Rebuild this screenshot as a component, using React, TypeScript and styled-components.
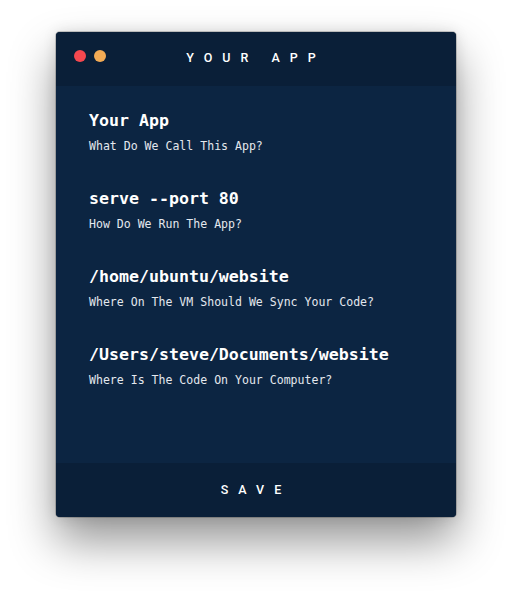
import React from "react";
import styled, { createGlobalStyle } from "styled-components";

const Global = createGlobalStyle`
  html, body { margin: 0; padding: 0; background: #ffffff; }
  body { font-family: "DejaVu Sans Mono", "Liberation Mono", monospace; }
`;

const Page = styled.div`
  display: flex;
  justify-content: center;
  padding-top: 32px;
  height: 597px;
  box-sizing: border-box;
`;

const Window = styled.div`
  width: 400px;
  height: 485px;
  display: flex;
  flex-direction: column;
  border-radius: 4px;
  overflow: hidden;
  background: #0c2542;
  box-shadow: 0 24px 46px rgba(0, 0, 0, 0.42), 0 0 14px rgba(0, 0, 0, 0.12),
    0 0 0 1px rgba(0, 0, 0, 0.18);
`;

const Bar = styled.div`
  position: relative;
  height: 54px;
  flex: none;
  display: flex;
  align-items: center;
  justify-content: center;
  background: #0a1f38;
`;

const Lights = styled.div`
  position: absolute;
  left: 18px;
  top: 18px;
  display: flex;
  gap: 8px;
`;

const Light = styled.span<{ $c: string }>`
  width: 12px;
  height: 12px;
  border-radius: 50%;
  background: ${(p) => p.$c};
`;

const Caps = styled.span<{ $shift?: number }>`
  font-family: Roboto, "Liberation Sans", Arial, sans-serif;
  font-size: 12.5px;
  font-weight: 500;
  letter-spacing: 10px;
  color: #ffffff;
  text-transform: uppercase;
  margin-top: ${(p) => p.$shift ?? 0}px;
`;

const Body = styled.div`
  flex: 1;
  display: flex;
  flex-direction: column;
  gap: 35px;
  padding: 25px 33px 0;
`;

const Field = styled.div`
  display: flex;
  flex-direction: column;
  gap: 7px;
`;

const Value = styled.div`
  font-family: "DejaVu Sans Mono", "Liberation Mono", monospace;
  font-weight: 700;
  font-size: 16.6px;
  line-height: 20px;
  color: #ffffff;
  white-space: nowrap;
`;

const Label = styled.div`
  font-family: "DejaVu Sans Mono", "Liberation Mono", monospace;
  font-size: 11.55px;
  line-height: 16px;
  color: #e4e8ee;
  white-space: nowrap;
`;

const Footer = styled.div`
  height: 54px;
  flex: none;
  display: flex;
  align-items: center;
  justify-content: center;
  background: #0a1f38;
`;

const fields = [
  { value: "Your App", label: "What Do We Call This App?" },
  { value: "serve --port 80", label: "How Do We Run The App?" },
  { value: "/home/ubuntu/website", label: "Where On The VM Should We Sync Your Code?" },
  { value: "/Users/steve/Documents/website", label: "Where Is The Code On Your Computer?" },
];

export default function App() {
  return (
    <>
      <Global />
      <Page>
        <Window>
          <Bar>
            <Lights>
              <Light $c="#f5484f" />
              <Light $c="#f3ab55" />
            </Lights>
            <Caps $shift={-4}>Your App</Caps>
          </Bar>
          <Body>
            {fields.map((f) => (
              <Field key={f.value}>
                <Value>{f.value}</Value>
                <Label>{f.label}</Label>
              </Field>
            ))}
          </Body>
          <Footer>
            <Caps $shift={-2}>Save</Caps>
          </Footer>
        </Window>
      </Page>
    </>
  );
}
